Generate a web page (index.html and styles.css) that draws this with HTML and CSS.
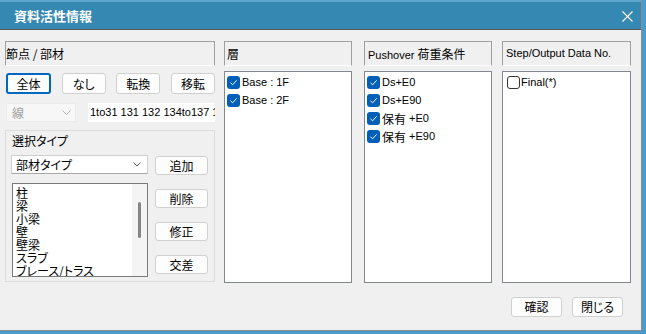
FILE: index.html
```html
<!DOCTYPE html>
<html lang="ja">
  <head>
    <meta charset="UTF-8" />
    <meta name="viewport" content="width=device-width, initial-scale=1.0" />
    <title>資料活性情報</title>
    <link rel="stylesheet" href="styles.css">
  </head>
  <body>
    <div class="dialog">
      <div class="titlebar">
        <span class="title">資料活性情報</span>
        <svg class="close" width="11" height="11" viewBox="0 0 11 11">
          <path d="M0.5 0.5 L10.5 10.5 M10.5 0.5 L0.5 10.5" stroke="#fff" stroke-width="1.1" />
        </svg>
      </div>
      <div class="content">
        <div class="columns">
          <div class="col col-target">
            <div class="col-header jp">節点 / 部材</div>
            <div class="btn-row">
              <button class="btn btn-default">全体</button>
              <button class="btn">なし</button>
              <button class="btn">転換</button>
              <button class="btn">移転</button>
            </div>
            <div class="filter-row">
              <div class="combo combo-disabled">
                <span>線</span>
                <svg width="9" height="5" viewBox="0 0 9 5"><polyline points="0.5,0.5 4.5,4.5 8.5,0.5" fill="none" stroke="#b4b4b4" /></svg>
              </div>
              <div class="id-field">1to31 131 132 134to137 138</div>
            </div>
            <div class="group">
              <div class="group-label">選択タイプ</div>
              <div class="group-body">
                <div class="group-left">
                  <div class="combo">
                    <span>部材タイプ</span>
                    <svg width="8" height="5" viewBox="0 0 8 5"><polyline points="0.5,0.5 4,4 7.5,0.5" fill="none" stroke="#555" /></svg>
                  </div>
                  <div class="listbox">
                    <div class="listbox-items">
                      <div>柱</div>
                      <div>梁</div>
                      <div>小梁</div>
                      <div>壁</div>
                      <div>壁梁</div>
                      <div>スラブ</div>
                      <div>ブレース/トラス</div>
                    </div>
                    <div class="scrollbar"><div class="thumb"></div></div>
                  </div>
                </div>
                <div class="group-buttons">
                  <button class="btn">追加</button>
                  <button class="btn">削除</button>
                  <button class="btn">修正</button>
                  <button class="btn">交差</button>
                </div>
              </div>
            </div>
          </div>

          <div class="col col-layer">
            <div class="col-header jp">層</div>
            <div class="checklist">
              <div class="check-item"><span class="check on"></span>Base : 1F</div>
              <div class="check-item"><span class="check on"></span>Base : 2F</div>
            </div>
          </div>

          <div class="col col-load">
            <div class="col-header">Pushover <span class="jp">荷重条件</span></div>
            <div class="checklist">
              <div class="check-item"><span class="check on"></span>Ds+E0</div>
              <div class="check-item"><span class="check on"></span>Ds+E90</div>
              <div class="check-item"><span class="check on"></span><span class="jp">保有</span>&nbsp;+E0</div>
              <div class="check-item"><span class="check on"></span><span class="jp">保有</span>&nbsp;+E90</div>
            </div>
          </div>

          <div class="col col-step">
            <div class="col-header">Step/Output Data No.</div>
            <div class="checklist">
              <div class="check-item step-item"><span class="check"></span>Final(*)</div>
            </div>
          </div>
        </div>

        <div class="footer">
          <button class="btn btn-footer">確認</button>
          <button class="btn btn-footer">閉じる</button>
        </div>
      </div>
    </div>
  </body>
</html>
```

FILE: styles.css
```css
body {
  margin: 0;
  background-color: #4a9bcb;
  font-family: "Liberation Sans", "Noto Sans CJK JP", sans-serif;
  font-size: 11px;
  color: #000;
}
.jp {
  font-family: "Noto Sans CJK JP", sans-serif;
  font-size: 12px;
  font-feature-settings: "palt";
}
.dialog {
  width: 641px;
  height: 330px;
  background: #f0f0f0;
  border-right: 1px solid #8c8c8c;
  border-bottom: 1px solid #8c8c8c;
  overflow: hidden;
}
.titlebar {
  height: 27px;
  border-top: 2px solid #5ba6cf;
  border-bottom: 1px solid #5a5a5a;
  background: #3488b2;
  display: flex;
  align-items: center;
  justify-content: space-between;
  padding: 0 8px 0 14px;
}
.title {
  color: #fff;
  font-family: "Noto Sans CJK JP", sans-serif;
  font-weight: bold;
  font-size: 13px;
  letter-spacing: 0;
}
.close {
  display: block;
  margin-top: 1px;
}
.content {
  padding: 11px 0 0 5px;
}
.columns {
  display: flex;
}
.col-target {
  width: 210px;
  margin-right: 9px;
}
.col-layer {
  width: 128px;
  margin-right: 12px;
}
.col-load {
  width: 128px;
  margin-right: 10px;
}
.col-step {
  width: 129px;
}
.col-header {
  box-sizing: border-box;
  height: 25px;
  line-height: 23px;
  padding-left: 2px;
  border: 1px solid #a0a0a0;
  border-bottom-color: #fff;
  white-space: nowrap;
  overflow: hidden;
}
.col-target .col-header {
  padding-left: 0;
}
.col-load .col-header,
.col-step .col-header {
  padding-left: 3px;
}
.btn {
  box-sizing: border-box;
  margin: 0;
  padding: 0;
  background: #fdfdfd;
  border: 1px solid #d0d0d0;
  border-radius: 3px;
  font-family: "Noto Sans CJK JP", sans-serif;
  font-size: 12px;
  font-feature-settings: "palt";
  color: #000;
  line-height: 1;
}
.btn-row {
  display: flex;
  justify-content: space-between;
  margin-top: 7px;
  padding-left: 1px;
}
.btn-row .btn {
  width: 44px;
  height: 21px;
}
.btn-row .btn-default {
  width: 45px;
  border: 2px solid #0067c0;
}
.filter-row {
  display: flex;
  margin-top: 9px;
  padding-left: 1px;
}
.combo {
  box-sizing: border-box;
  height: 19px;
  display: flex;
  align-items: center;
  justify-content: space-between;
  padding: 0 6px 0 4px;
  background: #fff;
  border: 1px solid #cfcfcf;
  border-bottom-color: #a8a8a8;
  font-family: "Noto Sans CJK JP", sans-serif;
  font-size: 12px;
  font-feature-settings: "palt";
}
.combo svg {
  display: block;
}
.combo-disabled {
  width: 70px;
  background: #f7f7f7;
  border: 1px solid #ececec;
  color: #a0a0a0;
  padding: 0 4px 0 5px;
}
.id-field {
  box-sizing: border-box;
  flex: 1;
  height: 19px;
  margin-left: 12px;
  padding-left: 2px;
  background: #fff;
  line-height: 19px;
  white-space: nowrap;
  overflow: hidden;
}
.group {
  box-sizing: border-box;
  height: 152px;
  margin-top: 8px;
  padding: 0 0 0 5px;
  border: 1px solid #dcdcdc;
}
.group-label {
  height: 20px;
  line-height: 20px;
  padding-left: 1px;
  font-family: "Noto Sans CJK JP", sans-serif;
  font-size: 12px;
  font-feature-settings: "palt";
}
.group-body {
  display: flex;
  margin-top: 4px;
}
.group-left {
  width: 137px;
}
.group-left .combo {
  width: 137px;
}
.listbox {
  box-sizing: border-box;
  display: flex;
  height: 94px;
  margin-top: 9px;
  margin-left: 1px;
  background: #fff;
  border: 1px solid #7a7a7a;
}
.listbox-items {
  flex: 1;
  padding: 2px 0 0 3px;
  overflow: hidden;
  font-family: "Noto Sans CJK JP", sans-serif;
  font-size: 12px;
  font-feature-settings: "palt";
  line-height: 13px;
  white-space: nowrap;
}
.scrollbar {
  width: 15px;
  background: #f4f4f4;
}
.thumb {
  width: 3px;
  height: 36px;
  margin: 18px 0 0 6px;
  border-radius: 2px;
  background: #858585;
}
.group-buttons {
  display: flex;
  flex-direction: column;
  gap: 14px;
  margin-left: 7px;
  padding-top: 1px;
}
.group-buttons .btn {
  width: 53px;
  height: 19px;
}
.checklist {
  box-sizing: border-box;
  height: 212px;
  margin-top: 5px;
  padding: 1px 0 0 2px;
  background: #fff;
  border: 1px solid #828790;
}
.check-item {
  display: flex;
  align-items: center;
  height: 18px;
  white-space: nowrap;
}
.check {
  box-sizing: border-box;
  width: 13px;
  height: 13px;
  margin-right: 2px;
  border: 1px solid #333;
  border-radius: 3px;
  background: #fff;
}
.check.on {
  border: none;
  background: #005fb8 url("data:image/svg+xml;utf8,<svg xmlns='http://www.w3.org/2000/svg' width='13' height='13'><polyline points='3.5,6.8 5.6,8.8 9.6,4.4' fill='none' stroke='white' stroke-width='1'/></svg>") no-repeat;
}
.step-item {
  padding-left: 2px;
}
.step-item .check {
  margin-right: 1px;
}
.footer {
  display: flex;
  justify-content: flex-end;
  gap: 10px;
  margin-top: 14px;
  padding-right: 18px;
}
.btn-footer {
  width: 51px;
  height: 20px;
}
```
